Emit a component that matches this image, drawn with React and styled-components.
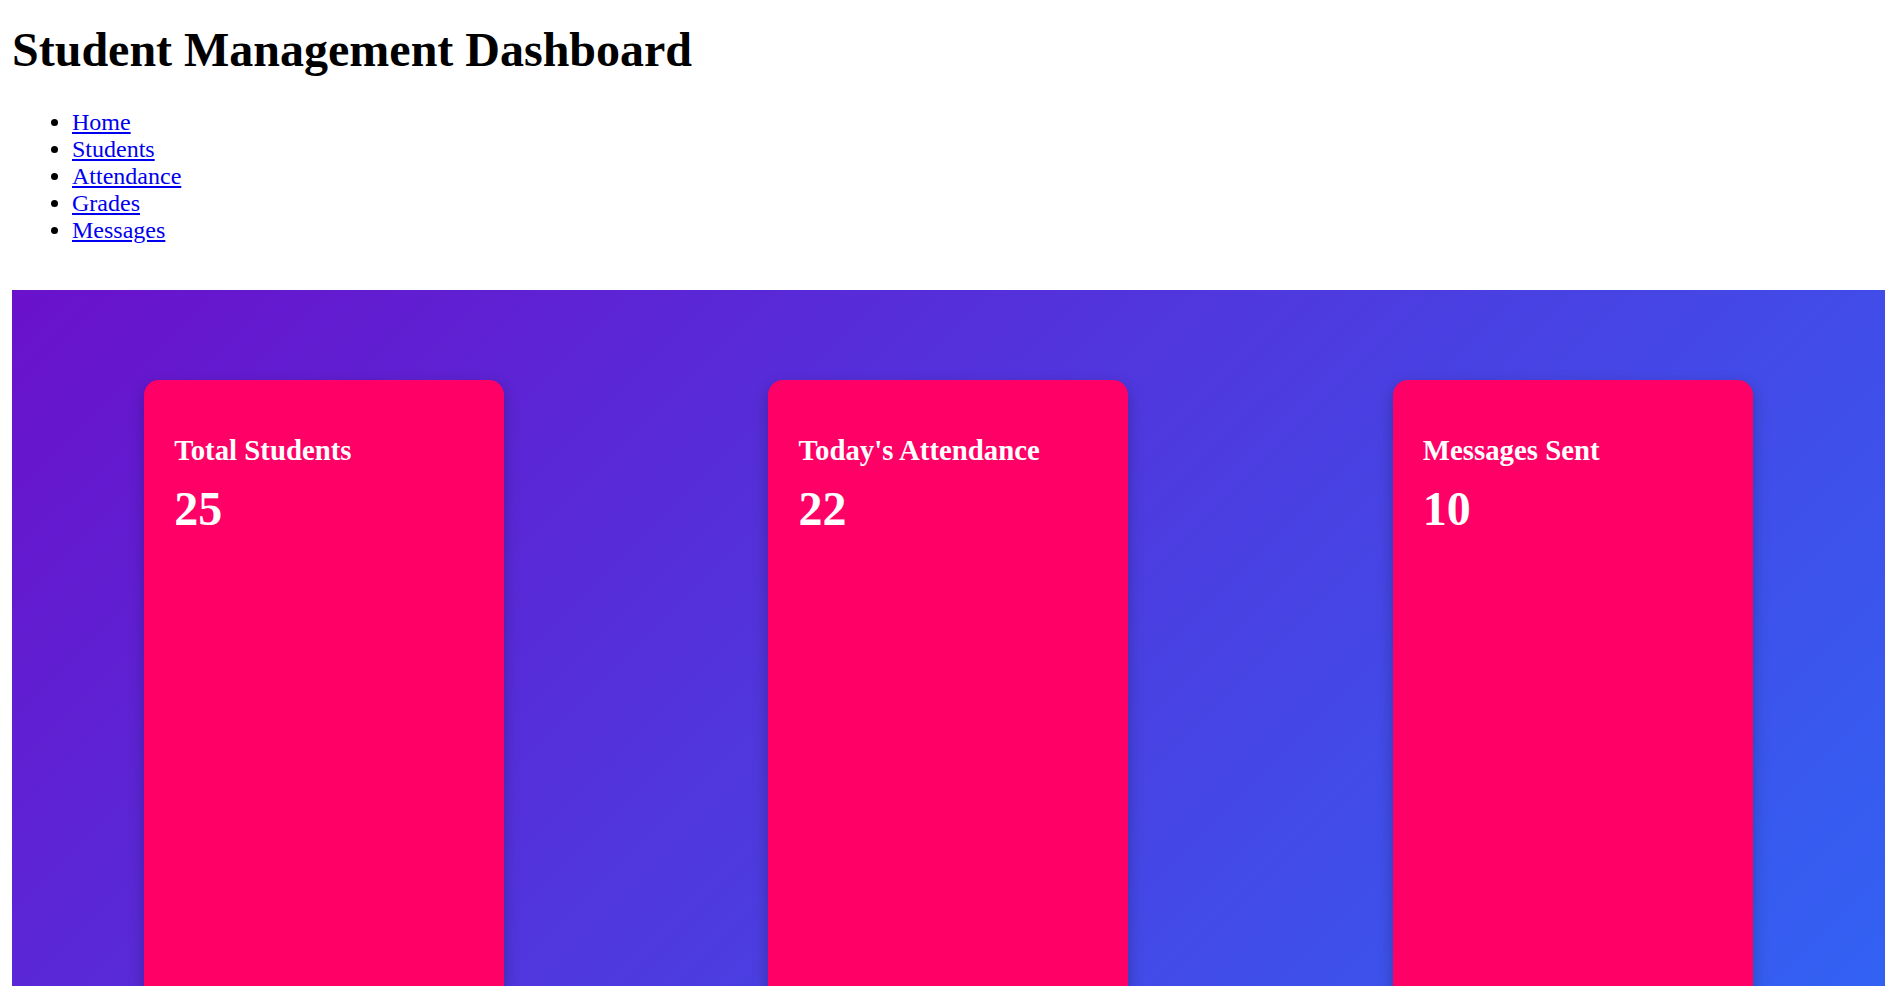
import React from "react";
import styled, { createGlobalStyle } from "styled-components";

const GlobalStyle = createGlobalStyle`
  html, body {
    margin: 0;
    padding: 0;
    background: #ffffff;
  }
  body {
    font-family: "Liberation Serif", "Times New Roman", serif;
    font-size: 24px;
    color: #000000;
  }
`;

const Page = styled.div`
  padding: 0 6px 0 12px;
`;

const Header = styled.header`
  display: block;
`;

const Title = styled.h1`
  font-size: 48px;
  font-weight: bold;
  margin: 22px 0 32px;
`;

const NavList = styled.ul`
  margin: 0;
  padding-left: 60px;
  list-style: disc;
`;

const NavItem = styled.li`
  font-size: 24px;
`;

const NavLink = styled.a`
  color: #0000ee;
  text-decoration: underline;
`;

const Stats = styled.section`
  margin-top: 46px;
  height: 1300px;
  padding: 90px 0;
  box-sizing: border-box;
  background: linear-gradient(135deg, #6a11cb 0%, #2575fc 100%);
  display: flex;
  justify-content: space-around;
  align-items: stretch;
`;

const Card = styled.div`
  width: 360px;
  box-sizing: border-box;
  padding: 30px;
  background: #ff0066;
  color: #ffffff;
  border-radius: 15px;
  box-shadow: 0 6px 15px rgba(0, 0, 0, 0.25);
`;

const CardTitle = styled.h3`
  font-size: 28.8px;
  font-weight: bold;
  margin: 24px 0 14px;
`;

const CardValue = styled.p`
  font-size: 48px;
  font-weight: bold;
  margin: 0;
`;

const links = ["Home", "Students", "Attendance", "Grades", "Messages"];

const stats = [
  { label: "Total Students", value: 25 },
  { label: "Today's Attendance", value: 22 },
  { label: "Messages Sent", value: 10 },
];

export default function App() {
  return (
    <>
      <GlobalStyle />
      <Page>
        <Header>
          <Title>Student Management Dashboard</Title>
          <nav>
            <NavList>
              {links.map((l) => (
                <NavItem key={l}>
                  <NavLink href="#">{l}</NavLink>
                </NavItem>
              ))}
            </NavList>
          </nav>
        </Header>
        <Stats>
          {stats.map((s) => (
            <Card key={s.label}>
              <CardTitle>{s.label}</CardTitle>
              <CardValue>{s.value}</CardValue>
            </Card>
          ))}
        </Stats>
      </Page>
    </>
  );
}
